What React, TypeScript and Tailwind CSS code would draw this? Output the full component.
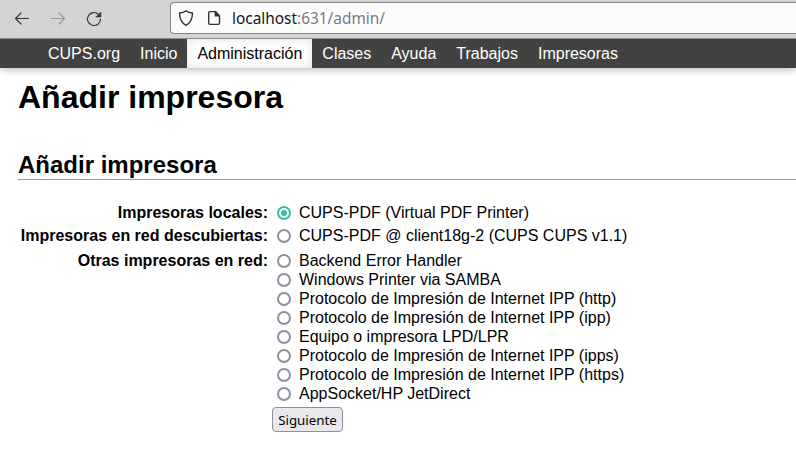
const nav = ['CUPS.org', 'Inicio', 'Administración', 'Clases', 'Ayuda', 'Trabajos', 'Impresoras'];

const groups = [
  { label: 'Impresoras locales:', items: ['CUPS-PDF (Virtual PDF Printer)'], gap: 'mb-[4px]' },
  { label: 'Impresoras en red descubiertas:', items: ['CUPS-PDF @ client18g-2 (CUPS CUPS v1.1)'], gap: 'mb-[6px]' },
  {
    label: 'Otras impresoras en red:',
    gap: 'mb-[4px]',
    items: [
      'Backend Error Handler',
      'Windows Printer via SAMBA',
      'Protocolo de Impresión de Internet IPP (http)',
      'Protocolo de Impresión de Internet IPP (ipp)',
      'Equipo o impresora LPD/LPR',
      'Protocolo de Impresión de Internet IPP (ipps)',
      'Protocolo de Impresión de Internet IPP (https)',
      'AppSocket/HP JetDirect',
    ],
  },
];

function Radio({ checked }: { checked: boolean }) {
  return (
    <span
      className={`flex h-[14px] w-[14px] shrink-0 items-center justify-center rounded-full border-2 bg-white ${
        checked ? 'border-[#35bfa4]' : 'border-[#8f8f9d]'
      }`}
    >
      {checked && <span className="h-[6px] w-[6px] rounded-full bg-[#35bfa4]" />}
    </span>
  );
}

function Toolbar() {
  return (
    <div className="flex h-[39px] items-start border-b border-[#8a8a8a] bg-[#d4d4d4]">
      <svg width="170" height="38" viewBox="0 0 170 38" fill="none" stroke="#333" strokeWidth="1.2" strokeLinecap="round" strokeLinejoin="round">
        <path d="M28.5 18.5H15.5M21 13l-5.5 5.5L21 24" />
        <path d="M51.500 18.500h13M59 13l5.500 5.500L59 24" stroke="#999" />
        <path d="M98.600 14.400A6.500 6.500 0 1 0 100.500 19" />
        <path d="M100.800 12.400v4.500h-4.500z" fill="#333" strokeWidth="0.800" />
      </svg>
      <div className="mt-[2px] flex h-[32px] flex-1 items-center rounded-l-[4px] border border-r-0 border-[#858585] bg-[#fcfcfc]">
        <svg width="61" height="30" viewBox="171 3 61 30" fill="none" stroke="#333" strokeWidth="1.400" strokeLinejoin="round">
          <path d="M186 10.700c1.700 1.400 4 2.100 6.500 2.300 0 5.300-1.500 9.600-6.500 12.300-5-2.700-6.500-7-6.500-12.300 2.500-.2 4.800-.9 6.500-2.300z" />
          <path d="M210 11.600h5.300l4.200 4.300v7.200c0 .8-.5 1.300-1.300 1.300h-8.200c-.8 0-1.300-.5-1.300-1.300v-10.200c0-.8.5-1.300 1.300-1.300z" />
          <path d="M215.300 11.600v4.300h4.200z" fill="#333" />
        </svg>
        <span className="font-['Noto_Sans',sans-serif] text-[15.4px] text-[#7b7b80]">
          <span className="text-[#15141a]">localhost</span>:631/admin/
        </span>
      </div>
    </div>
  );
}

export default function App() {
  return (
    <div className="h-[456px] w-full overflow-hidden bg-white font-['Liberation_Sans',Arial,sans-serif] text-[16px] leading-[19px] text-black">
      <Toolbar />
      <nav className="flex h-[29px] bg-[#424242] pl-[38px] text-white shadow-[0_0_10px_rgba(0,0,0,0.4)] [clip-path:inset(0_0_-12px_0)]">
        {nav.map((name) => (
          <a
            key={name}
            className={`px-[10px] leading-[29px] ${
              name === 'Administración' ? 'bg-white text-black shadow-[inset_0_0_10px_rgba(0,0,0,0.12)]' : ''
            }`}
          >
            {name}
          </a>
        ))}
      </nav>
      <main className="pl-[18px]">
        <h1 className="pt-[10px] text-[32px] leading-[38px] font-bold">Añadir impresora</h1>
        <h2 className="mt-[33px] h-[31px] border-b border-[#999] text-[24px] leading-[32px] font-bold">Añadir impresora</h2>
        <form className="mt-[23px]">
          {groups.map((group, g) => (
            <div key={group.label} className={`flex ${group.gap}`}>
              <div className="w-[250px] text-right font-bold">{group.label}</div>
              <div className="ml-[9px]">
                {group.items.map((item) => (
                  <label key={item} className="flex h-[19px] items-center gap-[8px]">
                    <Radio checked={g === 0} />
                    {item}
                  </label>
                ))}
              </div>
            </div>
          ))}
          <button type="button" className="ml-[254px] block h-[25px] w-[71px] rounded-[4px] border border-[#8f8f9d] bg-[#e9e9ed] font-['Noto_Sans',sans-serif] text-[13.333px] leading-[24px]">
            Siguiente
          </button>
        </form>
      </main>
    </div>
  );
}
